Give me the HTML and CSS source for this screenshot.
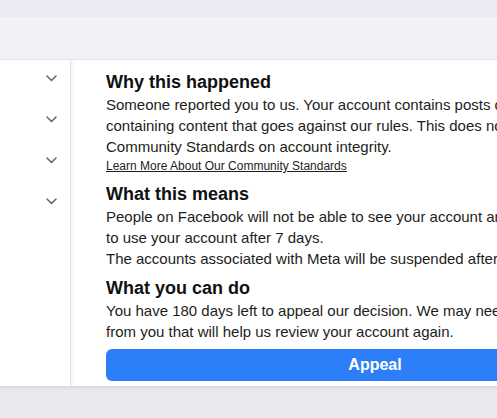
FILE: index.html
```html
<!DOCTYPE html>
<html>
<head>
<meta charset="utf-8">
<link rel="stylesheet" href="styles.css">
</head>
<body>
<div class="topbar"></div>
<div class="subbar"></div>
<div class="main">
  <aside class="sidebar">
    <div class="chev-row"><svg class="chev" viewBox="0 0 11 7" width="11" height="7"><path d="M1 1l4.5 4.5L10 1" fill="none" stroke="#5f6677" stroke-width="1.5" stroke-linecap="round" stroke-linejoin="round"/></svg></div>
    <div class="chev-row"><svg class="chev" viewBox="0 0 11 7" width="11" height="7"><path d="M1 1l4.5 4.5L10 1" fill="none" stroke="#5f6677" stroke-width="1.5" stroke-linecap="round" stroke-linejoin="round"/></svg></div>
    <div class="chev-row"><svg class="chev" viewBox="0 0 11 7" width="11" height="7"><path d="M1 1l4.5 4.5L10 1" fill="none" stroke="#5f6677" stroke-width="1.5" stroke-linecap="round" stroke-linejoin="round"/></svg></div>
    <div class="chev-row"><svg class="chev" viewBox="0 0 11 7" width="11" height="7"><path d="M1 1l4.5 4.5L10 1" fill="none" stroke="#5f6677" stroke-width="1.5" stroke-linecap="round" stroke-linejoin="round"/></svg></div>
  </aside>
  <section class="content">
    <h2 class="heading">Why this happened</h2>
    <p class="text">Someone reported you to us. Your account contains posts or messages<br>containing content that goes against our rules. This does not follow our<br>Community Standards on account integrity.</p>
    <a class="link" href="#">Learn More About Our Community Standards</a>
    <h2 class="heading h-next">What this means</h2>
    <p class="text">People on Facebook will not be able to see your account and you will not be able<br>to use your account after 7 days.<br>The accounts associated with Meta will be suspended after 7 days.</p>
    <h2 class="heading h-next2">What you can do</h2>
    <p class="text">You have 180 days left to appeal our decision. We may need more information<br>from you that will help us review your account again.</p>
    <button class="appeal">Appeal</button>
  </section>
</div>
<div class="footer"></div>
</body>
</html>
```

FILE: styles.css
```css
html, body {
  margin: 0;
  padding: 0;
  width: 497px;
  height: 418px;
  overflow: hidden;
  background: #e9e9ef;
  font-family: "Liberation Sans", Arial, sans-serif;
}
.topbar {
  height: 17px;
  background: #ebeaf3;
}
.subbar {
  height: 42px;
  background: #f1f2f5;
  border-bottom: 1px solid #e2e3e7;
}
.main {
  display: flex;
  height: 326px;
  background: #ffffff;
  box-shadow: 0 2px 3px rgba(0, 0, 0, 0.08);
  overflow: hidden;
}
.sidebar {
  flex: none;
  width: 71px;
  box-sizing: border-box;
  border-right: 1px solid #e6e7ea;
  box-shadow: 2px 0 3px rgba(0, 0, 0, 0.05);
  display: flex;
  flex-direction: column;
  align-items: flex-end;
  padding-top: 15px;
  padding-right: 13px;
}
.chev-row {
  height: 41px;
  display: flex;
  align-items: flex-start;
}
.chev {
  display: block;
}
.content {
  flex: none;
  width: 540px;
  padding-left: 35px;
  padding-top: 11px;
  color: #1c1e21;
  white-space: nowrap;
}
.heading {
  margin: 0 0 1px;
  font-size: 18px;
  font-weight: bold;
  line-height: 22px;
  color: #111111;
}
.h-next {
  margin-top: 8px;
}
.h-next2 {
  margin-top: 8px;
}
.text {
  margin: 0;
  font-size: 15px;
  line-height: 21px;
  color: #1c1e21;
}
.link {
  display: block;
  margin-top: 1px;
  font-size: 12px;
  line-height: 17px;
  color: #1c1e21;
  text-decoration: underline;
}
.appeal {
  display: block;
  margin-top: 7px;
  width: 538px;
  height: 32px;
  border: none;
  border-radius: 6px;
  background: #2d7ff9;
  color: #ffffff;
  font-family: "Liberation Sans", Arial, sans-serif;
  font-size: 16px;
  font-weight: bold;
}
.footer {
  height: 32px;
}
```
